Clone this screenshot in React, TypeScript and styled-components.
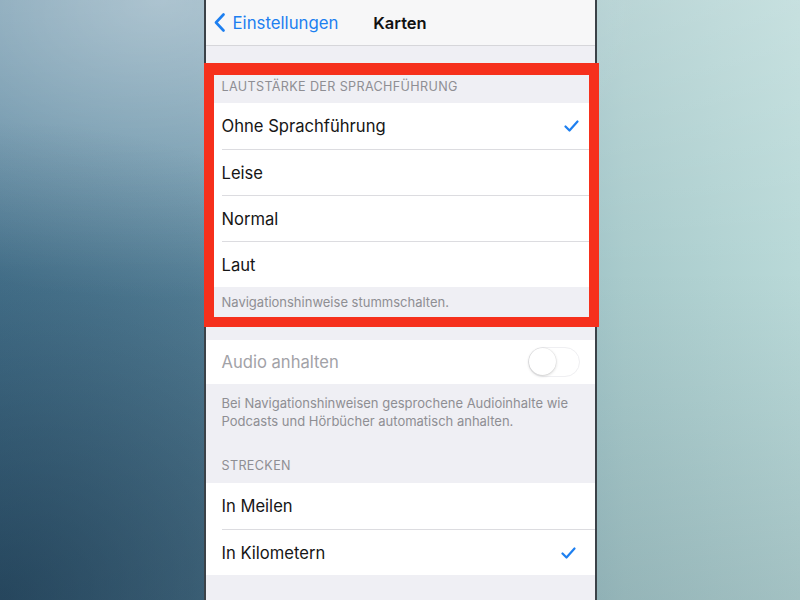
import styled, { createGlobalStyle } from "styled-components";

const GlobalStyle = createGlobalStyle`
  html, body {
    margin: 0;
    padding: 0;
  }
  body {
    font-family: "Inter", "Roboto", "Liberation Sans", sans-serif;
    -webkit-font-smoothing: antialiased;
  }
`;

const BLUE = "#1d7ff0";

const Backdrop = styled("main")`
  width: 100vw;
  height: 100vh;
  overflow: hidden;
  display: flex;
  justify-content: center;
  background:
    radial-gradient(ellipse 70% 80% at 0% 100%, rgba(8, 28, 48, 0.5) 0%, rgba(8, 28, 48, 0) 100%),
    radial-gradient(ellipse 60% 50% at 20% 0%, rgba(255, 255, 255, 0.38) 0%, rgba(255, 255, 255, 0) 100%),
    linear-gradient(to bottom, rgba(255, 255, 255, 0.2) 0%, rgba(255, 255, 255, 0) 45%, rgba(0, 20, 40, 0.12) 100%),
    linear-gradient(to right, #4d7d98 0%, #5b89a1 24%, #7ea6b6 50%, #a9cbcc 78%, #b9d9d8 100%);
`;

const Phone = styled("section")`
  width: 389px;
  height: 100%;
  display: flex;
  flex-direction: column;
  background: #efeff4;
  border-left: 2px solid #3b4248;
  border-right: 2px solid #3b4248;
`;

const NavBar = styled("header")`
  height: 45px;
  flex-shrink: 0;
  display: grid;
  grid-template-columns: 1fr auto 1fr;
  align-items: center;
  background: #f7f7f8;
  border-bottom: 1px solid #d6d6da;
`;

const BackLink = styled("a")`
  display: flex;
  align-items: center;
  gap: 8px;
  padding-left: 8px;
  color: ${BLUE};
  font-size: 16.8px;
  text-decoration: none;
`;

const NavTitle = styled("h1")`
  margin: 0;
  font-size: 16.5px;
  font-weight: 600;
  color: #111;
`;

const TopGap = styled("div")`
  height: 17px;
  flex-shrink: 0;
`;

const Highlight = styled("div")`
  border: 10px solid #f6301c;
  border-top-width: 12px;
  margin: 0 -4px 0 -2px;
  background: #efeff4;
`;

const SectionHeader = styled("div")<{ $top: number; $bottom: number; $inset: number }>`
  padding: ${(p) => p.$top}px ${(p) => p.$inset}px ${(p) => p.$bottom}px;
  font-size: 12.6px;
  line-height: 18px;
  color: #8e8e93;
  text-transform: uppercase;
  letter-spacing: 0.35px;
`;

const Group = styled("ul")`
  margin: 0;
  padding: 0;
  list-style: none;
  background: #fff;
`;

const Row = styled("li")<{ $inset: number; $end: number; $height?: number; $muted?: boolean }>`
  box-sizing: border-box;
  height: ${(p) => p.$height ?? 46}px;
  display: flex;
  align-items: center;
  justify-content: space-between;
  margin-left: ${(p) => p.$inset}px;
  padding-right: ${(p) => p.$end}px;
  font-size: 16.6px;
  color: ${(p) => (p.$muted ? "#a2a2a7" : "#161616")};
  & + & {
    border-top: 1px solid #dcdce0;
  }
`;

const FooterNote = styled("p")<{ $inset: number; $pad: string }>`
  margin: 0;
  padding: ${(p) => p.$pad};
  padding-left: ${(p) => p.$inset}px;
  padding-right: ${(p) => p.$inset}px;
  font-size: 13px;
  line-height: 18px;
  color: #8e8e93;
`;

const Gap = styled("div")<{ $h: number }>`
  height: ${(p) => p.$h}px;
  flex-shrink: 0;
`;

const Toggle = styled("span")`
  position: relative;
  width: 52px;
  height: 30px;
  border-radius: 15px;
  border: 1.5px solid #ececef;
  box-sizing: border-box;
  background: #fff;
  opacity: 0.8;
  &::after {
    content: "";
    position: absolute;
    left: 0;
    top: 0;
    width: 27px;
    height: 27px;
    border-radius: 50%;
    background: #fff;
    box-shadow: 0 1px 3px rgba(0, 0, 0, 0.22), 0 0 0 0.5px rgba(0, 0, 0, 0.08);
  }
`;

function Chevron() {
  return (
    <svg width="11" height="19" viewBox="0 0 11 19" fill="none">
      <path d="M9.5 1.5 L2 9.5 L9.5 17.5" stroke={BLUE} strokeWidth="2.6" strokeLinecap="round" strokeLinejoin="round" />
    </svg>
  );
}

function Check() {
  return (
    <svg width="15" height="12" viewBox="0 0 15 12" fill="none">
      <path d="M1.5 6.5 L5.5 10.5 L13.5 1.5" stroke={BLUE} strokeWidth="2.2" strokeLinecap="round" strokeLinejoin="round" />
    </svg>
  );
}

const volumeOptions = ["Ohne Sprachführung", "Leise", "Normal", "Laut"];
const units = ["In Meilen", "In Kilometern"];

export default function App() {
  const volume = "Ohne Sprachführung";
  const unit = "In Kilometern";

  return (
    <Backdrop>
      <GlobalStyle />
      <Phone>
        <NavBar>
          <BackLink href="#">
            <Chevron />
            Einstellungen
          </BackLink>
          <NavTitle>Karten</NavTitle>
          <span />
        </NavBar>
        <TopGap />

        <Highlight>
          <SectionHeader $top={3} $bottom={7} $inset={8}>Lautstärke der Sprachführung</SectionHeader>
          <Group>
            {volumeOptions.map((o) => (
              <Row key={o} $inset={8} $end={10}>
                {o}
                {o === volume && <Check />}
              </Row>
            ))}
          </Group>
          <FooterNote $inset={8} $pad="6px 0 6px">Navigationshinweise stummschalten.</FooterNote>
        </Highlight>

        <Gap $h={13} />
        <Group>
          <Row $inset={16} $end={15} $height={44} $muted>
            Audio anhalten
            <Toggle />
          </Row>
        </Group>
        <FooterNote $inset={16} $pad="10px 0 0">
          Bei Navigationshinweisen gesprochene Audioinhalte wie Podcasts und Hörbücher automatisch anhalten.
        </FooterNote>

        <SectionHeader $top={27} $bottom={8} $inset={16}>Strecken</SectionHeader>
        <Group>
          {units.map((u) => (
            <Row key={u} $inset={16} $end={19}>
              {u}
              {u === unit && <Check />}
            </Row>
          ))}
        </Group>
      </Phone>
    </Backdrop>
  );
}
